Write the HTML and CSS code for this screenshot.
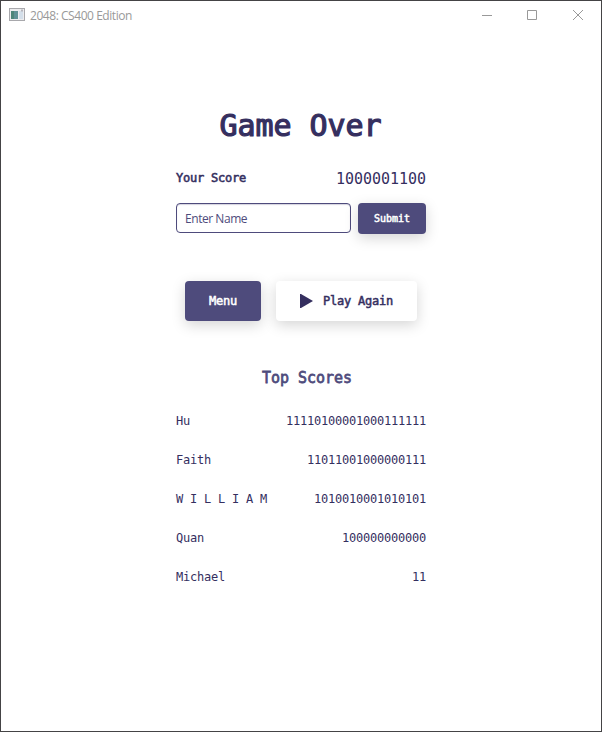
FILE: index.html
```html
<!DOCTYPE html>
<html lang="en">
<head>
<meta charset="utf-8">
<title>2048: CS400 Edition</title>
<link rel="stylesheet" href="styles.css">
</head>
<body>
<div class="window">
  <header class="titlebar">
    <svg class="app-icon" width="16" height="14" viewBox="0 0 16 14">
      <rect x=".5" y=".5" width="15" height="12" fill="#ececee" stroke="#a8a8ac"/>
      <rect x="2" y="3" width="7" height="8" fill="#5f9195"/>
      <rect x="2" y="3" width="3" height="8" fill="#4c8578"/>
      <rect x="10" y="3" width="4" height="8" fill="#d4dfea"/>
      <path d="M12 1.5h2v2h-2z" fill="#b5b5bc"/>
    </svg>
    <span class="caption">2048: CS400 Edition</span>
    <div class="controls">
      <svg width="46" height="30" viewBox="0 0 46 30"><path d="M19 14.5h10"/></svg>
      <svg width="46" height="30" viewBox="0 0 46 30"><path d="M18.5 9.5h9v9h-9z"/></svg>
      <svg width="46" height="30" viewBox="0 0 46 30"><path d="M18 9l10 10M28 9l-10 10"/></svg>
    </div>
  </header>
  <main class="content">
    <h1>Game Over</h1>
    <div class="score"><b>Your Score</b><span>1000001100</span></div>
    <form class="entry">
      <input type="text" placeholder="Enter Name">
      <button type="button" class="btn dark submit">Submit</button>
    </form>
    <div class="actions">
      <button type="button" class="btn dark menu">Menu</button>
      <button type="button" class="btn light play">
        <svg width="13" height="15" viewBox="0 0 13 15"><path d="M0 0L1 0L13 7L1 14H0Z" fill="#352f5f"/></svg>
        <span>Play Again</span>
      </button>
    </div>
    <h2>Top Scores</h2>
    <ul class="scores">
      <li><span>Hu</span><span>11110100001000111111</span></li>
      <li><span>Faith</span><span>11011001000000111</span></li>
      <li><span>W I L L I A M</span><span>1010010001010101</span></li>
      <li><span>Quan</span><span>100000000000</span></li>
      <li><span>Michael</span><span>11</span></li>
    </ul>
  </main>
</div>
</body>
</html>
```
FILE: styles.css
```css
* { box-sizing: border-box; }
body { margin: 0; background: #fff; }
.window {
  height: 732px;
  border: 1px solid #444345;
  overflow: hidden;
  color: #352f5f;
  font-family: "DejaVu Sans Mono", monospace;
}
.titlebar {
  height: 30px;
  display: flex;
  align-items: center;
  padding-left: 8px;
  font: 12px "Open Sans", sans-serif;
  color: #999;
}
.app-icon { margin-right: 5px; margin-top: -2px; }
.caption { letter-spacing: -.45px; margin-top: -2px; }
.controls { display: flex; margin-left: auto; }
.controls svg { fill: none; stroke: #999; }
.content { width: 250px; margin: 0 auto; padding-top: 74px; }
h1 {
  margin: 0 0 23px;
  text-align: center;
  font-size: 30px;
  font-weight: normal;
  -webkit-text-stroke: 1.2px;
  line-height: 42px;
  height: 40px;
  letter-spacing: -.06px;
  padding-right: 1px;
}
.score {
  display: flex;
  justify-content: space-between;
  align-items: center;
  height: 20px;
  font-size: 12px;
}
.score b { font-weight: normal; -webkit-text-stroke: .55px; letter-spacing: -.23px; }
.score span { font-size: 15px; letter-spacing: -.04px; transform: scaleY(1.1); }
.entry { display: flex; gap: 7px; margin: 15px 0 0; }
input {
  width: 175px;
  height: 30px;
  padding: 0 8px;
  border: 1px solid #4e4b7c;
  border-radius: 4px;
  outline: 0;
  background: #fff;
  box-shadow: inset 0 1px 1px #4e4b7c40;
  font: 12px "Open Sans", sans-serif;
  letter-spacing: -.45px;
}
input::placeholder { color: #4e4b7c; opacity: 1; }
.btn {
  display: flex;
  align-items: center;
  justify-content: center;
  padding: 0;
  border: 0;
  border-radius: 4px;
  box-shadow: 0 4px 14px rgba(0, 0, 0, .17);
  font: 12px "DejaVu Sans Mono", monospace;
  -webkit-text-stroke: .5px;
  letter-spacing: -.23px;
}
.dark { background: #4e4b7c; color: #fff; }
.light { background: #fff; color: #352f5f; }
.submit { width: 68px; height: 31px; font-size: 10px; letter-spacing: -.02px; }
.actions { display: flex; justify-content: center; gap: 15px; margin-top: 47px; }
.menu { width: 76px; height: 40px; }
.play { width: 141px; height: 40px; gap: 10px; }
h2 {
  margin: 46px 0 0;
  padding-left: 12px;
  text-align: center;
  color: #4e4b7c;
  font-size: 15px;
  font-weight: normal;
  -webkit-text-stroke: .7px;
  line-height: 22px;
  letter-spacing: -.04px;
  transform: scaleY(1.08);
}
.scores { list-style: none; margin: 12px 0 0; padding: 0; }
.scores li {
  display: flex;
  justify-content: space-between;
  height: 39px;
  align-items: center;
  font-size: 12px;
  letter-spacing: -.23px;
}
```
